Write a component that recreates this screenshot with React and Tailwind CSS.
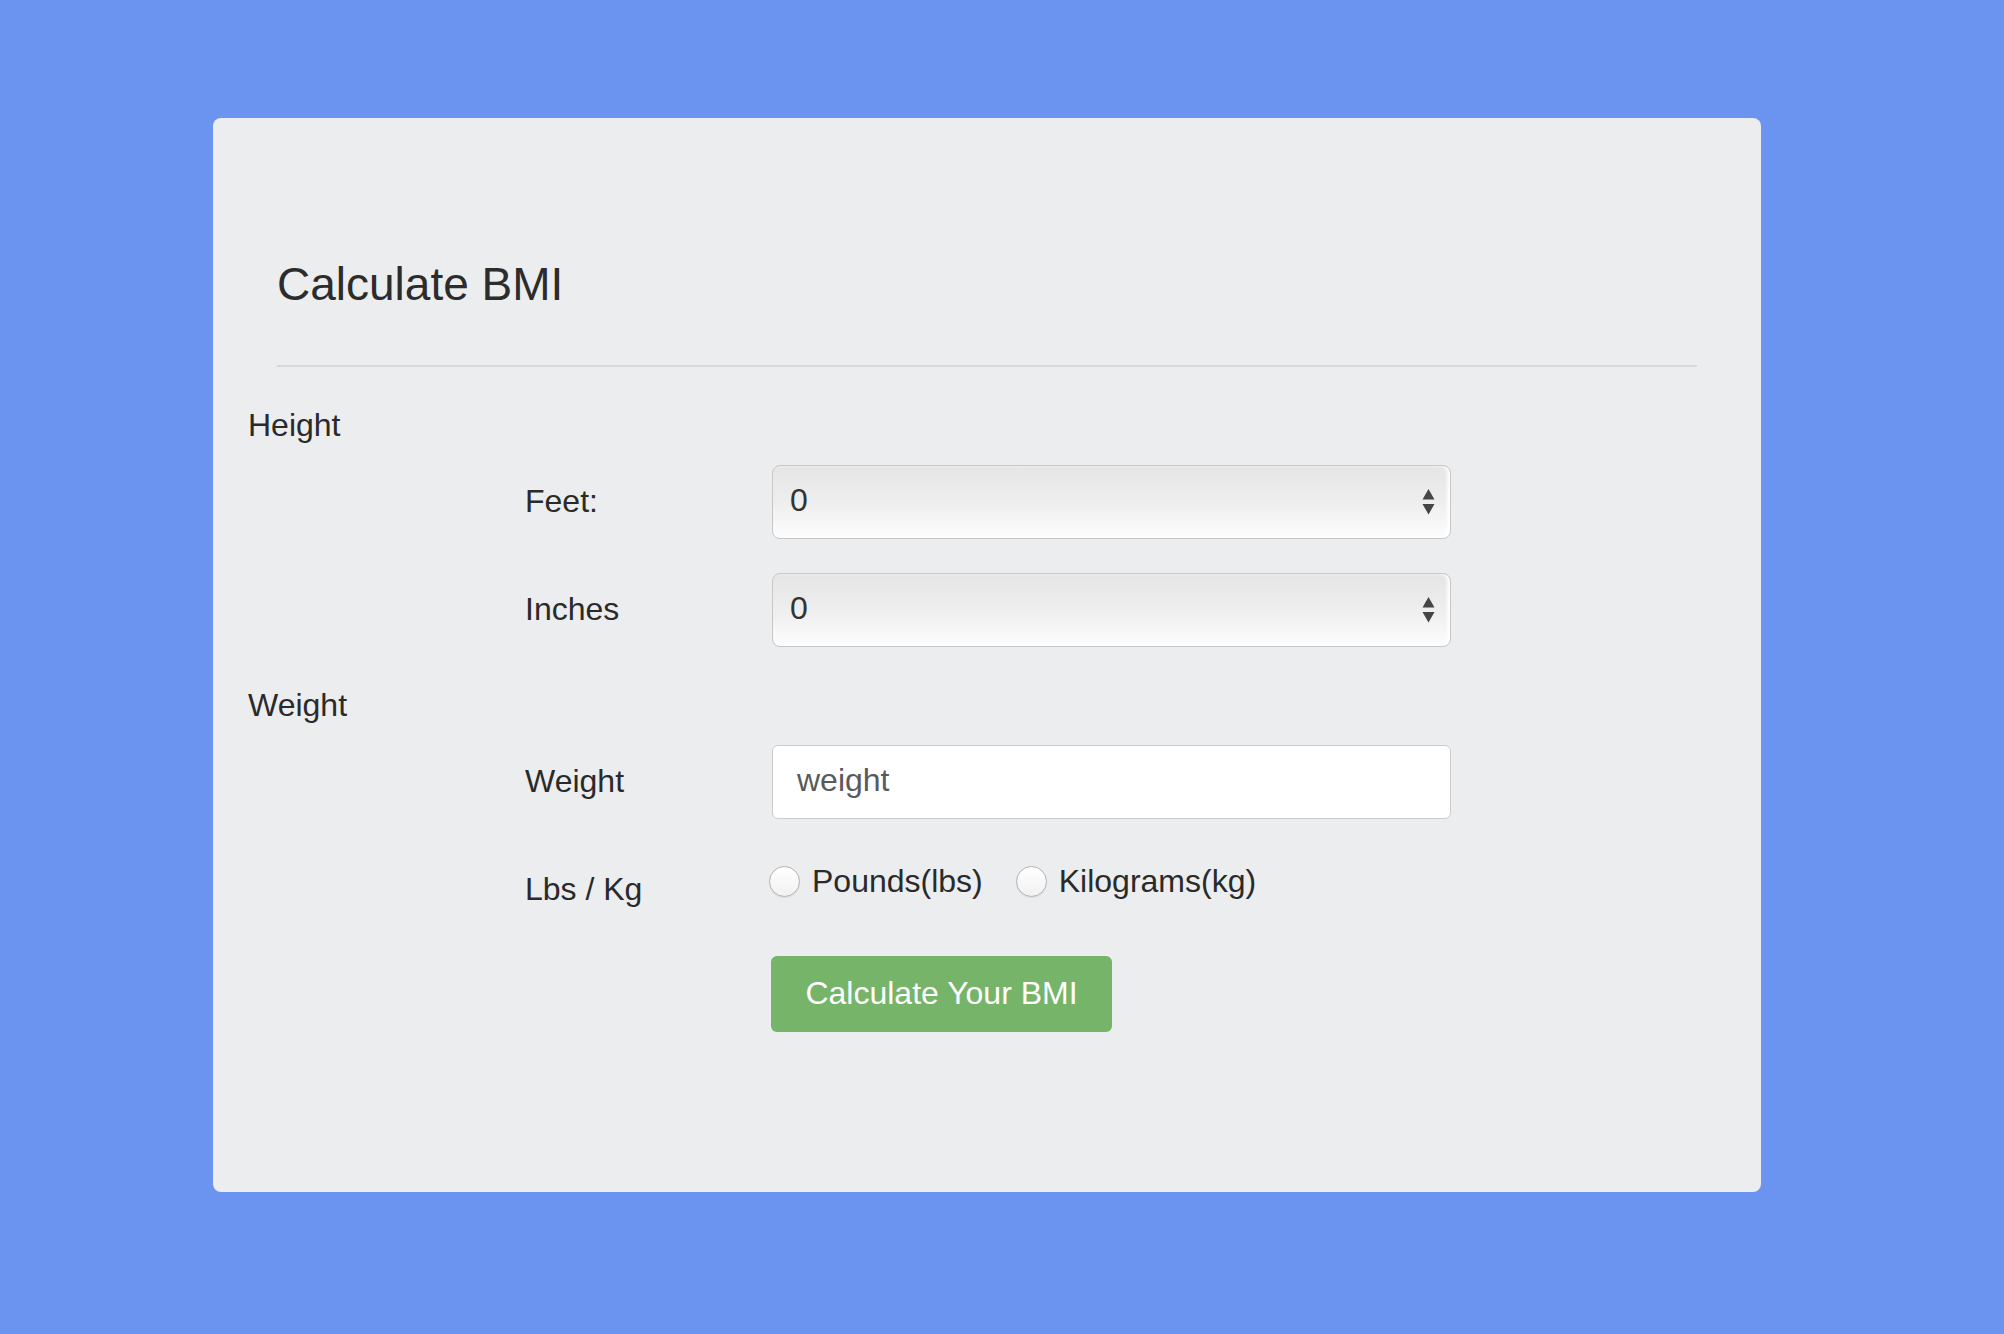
import React, { useState } from 'react';

const FONT = "font-['Liberation_Sans','Helvetica_Neue',Arial,sans-serif]";

const SelectArrows = () => (
    <svg width="13" height="28" viewBox="0 0 13 28" className="pointer-events-none absolute right-[16px] top-1/2 -translate-y-1/2">
        <path d="M6.5 1 L12.5 11.5 L0.5 11.5 Z" fill="#454545" />
        <path d="M0.5 16 L12.5 16 L6.5 26.5 Z" fill="#454545" />
    </svg>
);

const NumberSelect = ({ value, onChange, max }) => (
    <div className="relative w-[679px] h-[74px]">
        <select
            value={value}
            onChange={(e) => onChange(e.target.value)}
            className="appearance-none w-full h-full rounded-[8px] border-[1.5px] border-[#c7c7c7] bg-gradient-to-b from-[#e5e5e5] via-[#eeeeee] to-[#fdfdfd] shadow-[inset_-3px_0_3px_rgba(255,255,255,0.9)] pl-[17px] pb-[4px] text-[32px] text-[#333] outline-none"
        >
            {Array.from({ length: max + 1 }, (_, i) => (
                <option key={i} value={i}>{i}</option>
            ))}
        </select>
        <SelectArrows />
    </div>
);

const Row = ({ label, children, className = '' }) => (
    <div className={`flex pl-[312px] ${className}`}>
        <div className="w-[247px] shrink-0 pt-[16px] text-[32px] leading-[40px]">{label}</div>
        <div>{children}</div>
    </div>
);

const Radio = ({ name, label, checked, onChange }) => (
    <label className="flex items-center gap-[12px] h-[40px]">
        <input
            type="radio"
            name={name}
            checked={checked}
            onChange={onChange}
            className="appearance-none shrink-0 w-[31px] h-[31px] rounded-full border border-[#b3b3b3] bg-gradient-to-b from-white to-[#f1f1f1] shadow-[0_1px_1px_rgba(0,0,0,0.08)] checked:border-[9px] checked:border-[#3b82f6]"
        />
        <span className="text-[32px] leading-[40px]">{label}</span>
    </label>
);

export default function App() {
    const [feet, setFeet] = useState('0');
    const [inches, setInches] = useState('0');
    const [weight, setWeight] = useState('');
    const [unit, setUnit] = useState('');

    return (
        <div className={`min-h-[1334px] bg-[#6b93f0] pt-[118px] pl-[213px] ${FONT}`}>
            <div className="w-[1548px] h-[1074px] rounded-[8px] bg-[#ecedef] text-[#2a2a2a]">
                <div className="px-16 pt-[141px]">
                    <h1 className="text-[46px] leading-[50px] text-[#2c2c2c]">Calculate BMI</h1>
                    <div className="mt-[56px] h-[2px] bg-[#d7d8da]" />
                </div>

                <div className="pl-[35px] mt-[38px] text-[32px] leading-[40px]">Height</div>
                <Row label="Feet:" className="mt-[20px]">
                    <NumberSelect value={feet} onChange={setFeet} max={8} />
                </Row>
                <Row label="Inches" className="mt-[34px]">
                    <NumberSelect value={inches} onChange={setInches} max={11} />
                </Row>

                <div className="pl-[35px] mt-[38px] text-[32px] leading-[40px]">Weight</div>
                <Row label="Weight" className="mt-[20px]">
                    <input
                        type="text"
                        value={weight}
                        onChange={(e) => setWeight(e.target.value)}
                        placeholder="weight"
                        className="w-[679px] h-[74px] rounded-[6px] border-[1.5px] border-[#cbcbcb] bg-white pl-[24px] pb-[4px] text-[32px] text-[#333] placeholder:text-[#5a5a5a] outline-none"
                    />
                </Row>
                <Row label="Lbs / Kg" className="mt-[34px]">
                    <div className="flex gap-[33px] pt-[8px] -ml-[3px]">
                        <Radio name="unit" label="Pounds(lbs)" checked={unit === 'lbs'} onChange={() => setUnit('lbs')} />
                        <Radio name="unit" label="Kilograms(kg)" checked={unit === 'kg'} onChange={() => setUnit('kg')} />
                    </div>
                </Row>

                <div className="pl-[558px] mt-[47px]">
                    <button className="w-[341px] h-[76px] rounded-[6px] bg-[#75b469] text-white text-[32px] pb-[2px]">
                        Calculate Your BMI
                    </button>
                </div>
            </div>
        </div>
    );
}
